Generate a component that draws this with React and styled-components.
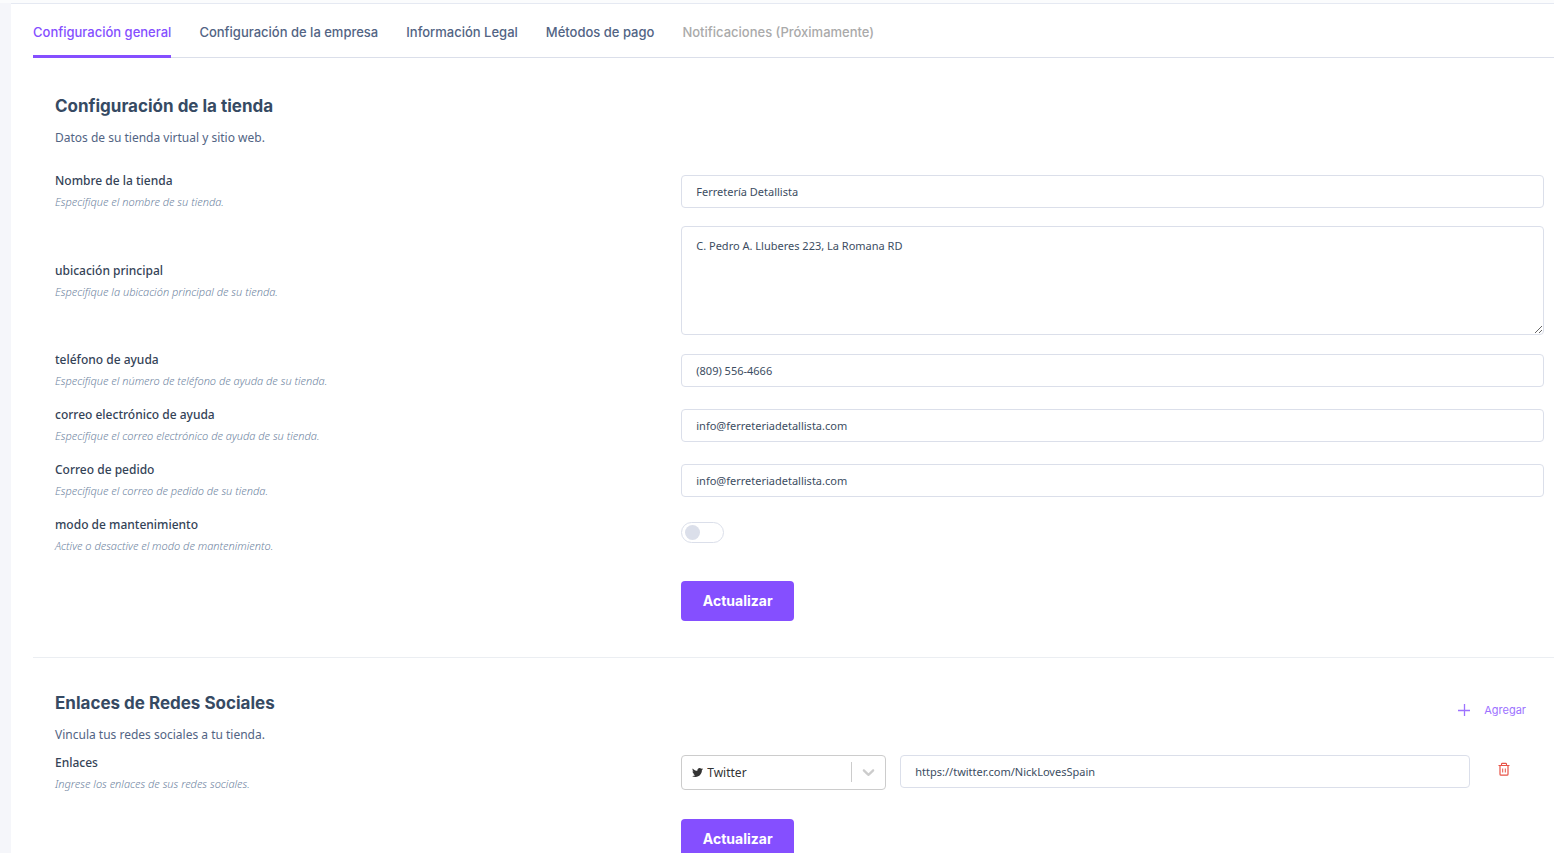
import React, { useState } from "react";
import styled, { createGlobalStyle } from "styled-components";
import { FaTwitter } from "react-icons/fa";

const TABS = [
  { id: "general", label: "Configuración general" },
  { id: "company", label: "Configuración de la empresa" },
  { id: "legal", label: "Información Legal" },
  { id: "payments", label: "Métodos de pago" },
  { id: "notifications", label: "Notificaciones (Próximamente)", disabled: true },
];

const Field = ({ id, label, note, children }) => (
  <Row>
    <LabelBlock>
      <Label htmlFor={id}>{label}</Label>
      <Note>{note}</Note>
    </LabelBlock>
    {children}
  </Row>
);

const App = () => {
  const [activeTab, setActiveTab] = useState("general");
  const [store, setStore] = useState({
    name: "Ferretería Detallista",
    address: "C. Pedro A. Lluberes 223, La Romana RD",
    phone: "(809) 556-4666",
    helpEmail: "info@ferreteriadetallista.com",
    orderEmail: "info@ferreteriadetallista.com",
    maintenance: false,
  });
  const [link, setLink] = useState({
    network: "Twitter",
    url: "https://twitter.com/NickLovesSpain",
  });

  const handleChange = (e) => {
    const { name, value, type, checked } = e.target;
    setStore({ ...store, [name]: type === "checkbox" ? checked : value });
  };

  const handleSubmit = (e) => e.preventDefault();

  return (
    <Page>
      <GlobalStyle />
      <Panel>
        <Tabs>
          {TABS.map((tab) => (
            <Tab
              key={tab.id}
              type="button"
              disabled={tab.disabled}
              $active={tab.id === activeTab}
              onClick={() => setActiveTab(tab.id)}
            >
              {tab.label}
            </Tab>
          ))}
        </Tabs>

        <Section onSubmit={handleSubmit}>
          <SectionHead>
            <div>
              <Title>Configuración de la tienda</Title>
              <Subtitle>Datos de su tienda virtual y sitio web.</Subtitle>
            </div>
          </SectionHead>
          <Rows $spaced>
            <Field id="name" label="Nombre de la tienda" note="Especifique el nombre de su tienda.">
              <Input id="name" name="name" value={store.name} onChange={handleChange} />
            </Field>
            <Field id="address" label="ubicación principal" note="Especifique la ubicación principal de su tienda.">
              <TextArea id="address" name="address" value={store.address} onChange={handleChange} />
            </Field>
            <Field id="phone" label="teléfono de ayuda" note="Especifique el número de teléfono de ayuda de su tienda.">
              <Input id="phone" name="phone" value={store.phone} onChange={handleChange} />
            </Field>
            <Field id="helpEmail" label="correo electrónico de ayuda" note="Especifique el correo electrónico de ayuda de su tienda.">
              <Input id="helpEmail" name="helpEmail" value={store.helpEmail} onChange={handleChange} />
            </Field>
            <Field id="orderEmail" label="Correo de pedido" note="Especifique el correo de pedido de su tienda.">
              <Input id="orderEmail" name="orderEmail" value={store.orderEmail} onChange={handleChange} />
            </Field>
            <Field id="maintenance" label="modo de mantenimiento" note="Active o desactive el modo de mantenimiento.">
              <Switch id="maintenance" name="maintenance" type="checkbox" checked={store.maintenance} onChange={handleChange} />
            </Field>
          </Rows>
          <Actions>
            <SubmitButton type="submit">Actualizar</SubmitButton>
          </Actions>
        </Section>

        <Divider />

        <Section $compact onSubmit={handleSubmit}>
          <SectionHead>
            <div>
              <Title>Enlaces de Redes Sociales</Title>
              <Subtitle>Vincula tus redes sociales a tu tienda.</Subtitle>
            </div>
            <AddButton type="button">
              <svg width="12" height="12" viewBox="0 0 12 12" aria-hidden="true">
                <path d="M6.5 0v12M0 6.5h12" stroke="currentColor" strokeWidth="1.3" />
              </svg>
              Agregar
            </AddButton>
          </SectionHead>
          <Rows>
            <Field id="url" label="Enlaces" note="Ingrese los enlaces de sus redes sociales.">
              <LinkRow>
                <SelectBox>
                  <FaTwitter size={11} aria-hidden="true" />
                  <Select
                    aria-label="Red social"
                    value={link.network}
                    onChange={(e) => setLink({ ...link, network: e.target.value })}
                  >
                    <option>Twitter</option>
                    <option>Facebook</option>
                    <option>Instagram</option>
                  </Select>
                  <Chevron viewBox="0 0 20 20" aria-hidden="true">
                    <path d="M4.516 7.548c0.436-0.446 1.043-0.481 1.576 0l3.908 3.747 3.908-3.747c0.533-0.481 1.141-0.446 1.574 0 0.436 0.445 0.408 1.197 0 1.615-0.406 0.418-4.695 4.502-4.695 4.502-0.217 0.223-0.502 0.335-0.787 0.335s-0.57-0.112-0.789-0.335c0 0-4.287-4.084-4.695-4.502s-0.436-1.17 0-1.615z" />
                  </Chevron>
                </SelectBox>
                <Input id="url" value={link.url} onChange={(e) => setLink({ ...link, url: e.target.value })} />
                <DeleteButton type="button" aria-label="Eliminar enlace">
                  <svg width="12" height="14" viewBox="0 0 12 14" fill="none" stroke="currentColor" aria-hidden="true">
                    <path d="M0.5 3.5h11M3.5 3.5V2.2c0-.5.3-.8.8-.8h3.4c.5 0 .8.3.8.8v1.3" strokeWidth="1.1" />
                    <path d="M2 3.5v8.7c0 .6.4 1 1 1h6c.6 0 1-.4 1-1V3.5" strokeWidth="1.2" />
                    <path d="M4.7 6.5v4M7.3 6.5v4" strokeWidth="1" />
                  </svg>
                </DeleteButton>
              </LinkRow>
            </Field>
          </Rows>
          <Actions>
            <SubmitButton type="submit">Actualizar</SubmitButton>
          </Actions>
        </Section>
      </Panel>
    </Page>
  );
};

// Styled Components
const GlobalStyle = createGlobalStyle`
  * {
    box-sizing: border-box;
  }

  body {
    margin: 0;
    background: #f5f6fa;
    font-family: "Noto Sans", sans-serif;
    color: #364a63;
  }

  button, input, select, textarea {
    font-family: inherit;
  }
`;

const Page = styled.div`
  padding-left: 11px;
  border-top: 3px solid #fbfcfd;
  height: 100vh;
  overflow: hidden;
`;

const Panel = styled.main`
  min-height: 100%;
  padding-left: 22px;
  background: #fff;
  border-top: 1px solid #e5e9f2;
`;

const Tabs = styled.nav`
  display: flex;
  gap: 28px;
  border-bottom: 1px solid #dbdfea;
`;

const Tab = styled.button`
  height: 54px;
  margin-bottom: -1px;
  padding: 5px 0 0;
  border: 0;
  border-bottom: 3px solid ${({ $active }) => ($active ? "#854fff" : "transparent")};
  background: none;
  font-family: Inter, sans-serif;
  font-size: 13px;
  font-weight: 500;
  color: ${({ $active }) => ($active ? "#854fff" : "#526484")};
  cursor: pointer;

  &:disabled {
    color: #aaaaaa;
    cursor: default;
  }
`;

const Section = styled.form`
  padding: ${({ $compact }) => ($compact ? "33px" : "36px")} 10px 36px 22px;
`;

const SectionHead = styled.div`
  display: flex;
  justify-content: space-between;
  align-items: flex-start;
`;

const Title = styled.h2`
  margin: 0 0 10px;
  font-family: Inter, sans-serif;
  font-size: 17px;
  line-height: 24px;
  font-weight: 700;
`;

const Subtitle = styled.p`
  margin: 0;
  font-size: 12px;
  line-height: 20px;
  color: #526484;
`;

const Rows = styled.div`
  display: flex;
  flex-direction: column;
  gap: 15px;
  padding-top: ${({ $spaced }) => ($spaced ? "23px" : "8px")};
`;

const Row = styled.div`
  display: grid;
  grid-template-columns: 5fr 7fr;
  column-gap: 10px;
  align-items: center;
  min-height: 40px;
`;

const LabelBlock = styled.div`
  display: flex;
  flex-direction: column;
  gap: 2px;
`;

const Label = styled.label`
  font-size: 12px;
  line-height: 20px;
  font-weight: 500;
  color: #344357;
`;

const Note = styled.span`
  font-size: 11px;
  line-height: 18px;
  font-style: italic;
  font-weight: 300;
  color: #6d83a0;
`;

const Input = styled.input`
  width: 100%;
  height: 33px;
  padding: 0 14px;
  border: 1px solid #dbdfea;
  border-radius: 4px;
  background: #fff;
  font-size: 11px;
  color: #3c4d62;
`;

const TextArea = styled.textarea`
  display: block;
  width: 100%;
  height: 109px;
  padding: 10px 14px;
  border: 1px solid #dbdfea;
  border-radius: 4px;
  font-size: 11px;
  line-height: 18px;
  color: #3c4d62;
  resize: vertical;
`;

const Switch = styled.input`
  appearance: none;
  display: flex;
  align-items: center;
  width: 43px;
  height: 21px;
  margin: 0 0 6px;
  padding: 0 3px;
  border: 1px solid #dbdfea;
  border-radius: 11px;
  background: #fff;
  cursor: pointer;

  &::before {
    content: "";
    width: 15px;
    height: 15px;
    border-radius: 50%;
    background: #dbdfea;
  }

  &:checked {
    justify-content: flex-end;
    border-color: #854fff;
    background: #854fff;
  }
`;

const Actions = styled.div`
  display: grid;
  grid-template-columns: 5fr 7fr;
  column-gap: 10px;
  padding-top: 26px;
`;

const SubmitButton = styled.button`
  grid-column: 2;
  justify-self: start;
  width: 113px;
  height: 40px;
  padding: 0 0 2px;
  border: 0;
  border-radius: 4px;
  background: #854fff;
  font-family: Inter, sans-serif;
  font-size: 14px;
  font-weight: 700;
  color: #fff;
  cursor: pointer;
`;

const Divider = styled.hr`
  margin: 0;
  border: 0;
  border-top: 1px solid #ebeef2;
`;

const AddButton = styled.button`
  display: flex;
  align-items: center;
  gap: 14px;
  height: 38px;
  margin-right: 18px;
  padding: 0;
  border: 0;
  background: none;
  font-family: Inter, sans-serif;
  font-size: 11px;
  color: #9d72ff;
  cursor: pointer;
`;

const LinkRow = styled.div`
  display: grid;
  grid-template-columns: 205px 1fr 74px;
  align-items: start;
  padding-bottom: 2px;

  ${Input} {
    margin-left: 14px;
    width: calc(100% - 14px);
  }
`;

const SelectBox = styled.div`
  display: flex;
  align-items: center;
  height: 35px;
  padding-left: 10px;
  border: 1px solid #cccccc;
  border-radius: 4px;
  color: #333333;
`;

const Select = styled.select`
  appearance: none;
  flex: 1;
  min-width: 0;
  padding: 0 4px;
  border: 0;
  background: none;
  font-size: 12px;
  color: #333333;
`;

const Chevron = styled.svg`
  width: 34px;
  height: 20px;
  border-left: 1px solid #cccccc;
  fill: #cccccc;
`;

const DeleteButton = styled.button`
  display: flex;
  align-items: center;
  justify-self: end;
  height: 28px;
  padding: 0;
  margin-right: 34px;
  border: 0;
  background: none;
  color: #e85347;
  cursor: pointer;
`;

export default App;
